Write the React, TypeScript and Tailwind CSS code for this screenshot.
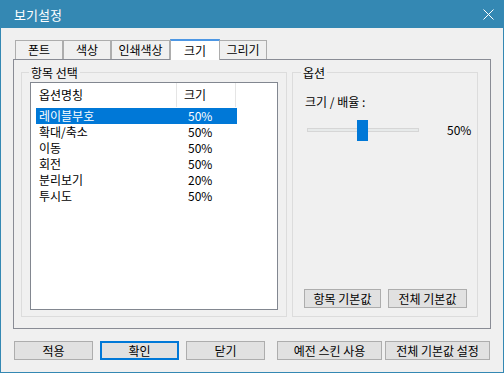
import React from "react";

const FONT = "font-['Noto_Sans_CJK_KR','Liberation_Sans',sans-serif]";

function Btn({ w, label, focused }: { w: string; label: string; focused?: boolean }) {
  return (
    <div
      className={`${w} h-[19px] flex items-center justify-center bg-[#e1e1e1] leading-none ${
        focused ? "border-2 border-[#0078d7]" : "border border-[#adadad]"
      }`}
    >
      {label}
    </div>
  );
}

const rows = [
  ["레이블부호", "50%"],
  ["확대/축소", "50%"],
  ["이동", "50%"],
  ["회전", "50%"],
  ["분리보기", "20%"],
  ["투시도", "50%"],
];

export default function App() {
  return (
    <div
      className={`w-[504px] h-[373px] flex flex-col bg-[#f0f0f0] border border-t-0 border-[#3488b3] ${FONT} text-[12px] text-black`}
    >
      {/* title bar */}
      <div className="h-[28px] shrink-0 bg-[#3488b3] flex items-center justify-between pl-[14px] pr-[9px] text-white text-[13px] -mx-px">
        <span className="leading-none">보기설정</span>
        <svg width="11" height="11" viewBox="0 0 11 11" className="mr-[1px]">
          <path d="M0.5 0.5 L10.5 10.5 M10.5 0.5 L0.5 10.5" stroke="white" strokeWidth="1" />
        </svg>
      </div>

      {/* tabs + panel */}
      <div className="flex flex-col pl-[12px] pt-[11px]">
        <div className="flex items-end h-[20px] ml-[2px]">
          <div className="w-[48px] h-[19px] border border-b-0 border-[#adadad] bg-[#f0f0f0] flex items-center justify-center leading-none">
            폰트
          </div>
          <div className="w-[48px] h-[19px] border border-b-0 border-[#adadad] bg-[#f0f0f0] flex items-center justify-center leading-none">
            색상
          </div>
          <div className="w-[59px] h-[19px] border border-b-0 border-[#adadad] bg-[#f0f0f0] flex items-center justify-center leading-none">
            인쇄색상
          </div>
          <div className="relative z-10 -mb-px w-[50px] h-[21px] border-x border-[#adadad] border-t-2 border-t-[#4d97e4] bg-white flex items-center justify-center leading-none">
            크기
          </div>
          <div className="w-[47px] h-[19px] border border-l-0 border-b-0 border-[#adadad] bg-[#f0f0f0] flex items-center justify-center leading-none">
            그리기
          </div>
        </div>

        <div className="w-[478px] h-[270px] border border-[#898c95] flex pt-[12px] pl-[7px] gap-[5px]">
          {/* group 1 */}
          <div className="relative w-[266px] h-[245px] border border-[#dcdcdc] pt-[9px] px-[8px]">
            <span className="absolute -top-[8px] left-[7px] px-[2px] bg-[#f0f0f0] leading-[16px]">항목 선택</span>
            <div className="w-[248px] h-[228px] border border-[#828790] bg-white flex flex-col">
              <div className="flex h-[24px]">
                <div className="w-[146px] border-r border-[#e5e5e5] pl-[8px] flex items-center leading-none">
                  옵션명칭
                </div>
                <div className="w-[59px] border-r border-[#e5e5e5] pl-[7px] flex items-center leading-none">
                  크기
                </div>
              </div>
              <div className="mt-px flex flex-col">
                {rows.map(([name, size], i) => (
                  <div
                    key={name}
                    className={`ml-[5px] w-[201px] h-[16px] flex items-center leading-none ${
                      i === 0 ? "bg-[#0078d7] text-white" : ""
                    }`}
                  >
                    <span className="w-[152px] pl-[3px]">{name}</span>
                    <span>{size}</span>
                  </div>
                ))}
              </div>
            </div>
          </div>

          {/* group 2 */}
          <div className="relative w-[186px] h-[245px] border border-[#dcdcdc] flex flex-col pb-[8px]">
            <span className="absolute -top-[8px] left-[8px] px-[2px] bg-[#f0f0f0] leading-[16px]">옵션</span>
            <div className="mt-[21px] pl-[12px] leading-[16px]">크기 / 배율 :</div>
            <div className="mt-[9px] h-[21px] flex items-center pl-[14px]">
              <div className="relative w-[112px] h-[4px] border border-[#d6d6d6] bg-[#e7eaea]">
                <div className="absolute left-[49px] -top-[9px] w-[11px] h-[21px] bg-[#0078d7]" />
              </div>
              <span className="ml-[28px] leading-none">50%</span>
            </div>
            <div className="mt-auto flex gap-[7px] pl-[11px]">
              <Btn w="w-[77px]" label="항목 기본값" />
              <Btn w="w-[79px]" label="전체 기본값" />
            </div>
          </div>
        </div>
      </div>

      {/* bottom buttons */}
      <div className="flex mt-[12px] pl-[13px]">
        <Btn w="w-[79px]" label="적용" />
        <div className="ml-[7px]">
          <Btn w="w-[79px]" label="확인" focused />
        </div>
        <div className="ml-[7px]">
          <Btn w="w-[79px]" label="닫기" />
        </div>
        <div className="ml-[12px]">
          <Btn w="w-[105px]" label="예전 스킨 사용" />
        </div>
        <div className="ml-[3px]">
          <Btn w="w-[105px]" label="전체 기본값 설정" />
        </div>
      </div>
    </div>
  );
}
